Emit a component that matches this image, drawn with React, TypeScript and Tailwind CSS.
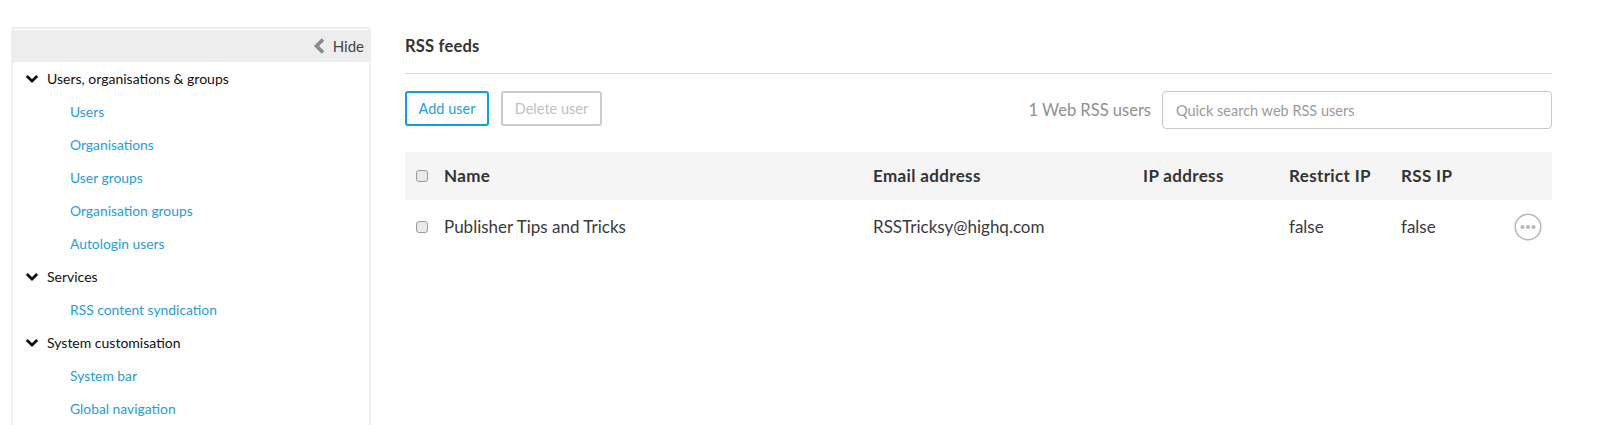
import React from "react";

function Chevron() {
  return (
    <svg width="14" height="10" viewBox="0 0 14 10" className="shrink-0">
      <path d="M1.8 2 L7 7 L12.2 2" fill="none" stroke="#111" strokeWidth="2.8" />
    </svg>
  );
}

function Group({ label }: { label: string }) {
  return (
    <div className="flex h-[33px] items-center pl-[12px] text-[14px] text-[#111]">
      <Chevron />
      <span className="ml-[8px]">{label}</span>
    </div>
  );
}

function Item({ label }: { label: string }) {
  return (
    <div className="flex h-[33px] items-center pl-[57px] pt-[2px] text-[13.85px] text-[#2a9bdc]">{label}</div>
  );
}

function Check() {
  return <span className="block h-[12px] w-[12px] rounded-[3px] border border-[#9a9a9a] bg-[#e9e9e9]" />;
}

const cols = "grid grid-cols-[39px_429px_270px_146px_112px_113px_1fr] items-center";

export default function App() {
  return (
    <div className="h-[425px] w-[1615px] overflow-hidden bg-white font-['Lato',sans-serif]">
      <div className="flex items-start pl-[11px] pt-[27px]">
        <aside className="h-[420px] w-[360px] shrink-0 rounded-t-[3px] border-2 border-[#eeeeee] border-b-0 bg-white">
          <div className="mt-[1px] flex h-[32px] items-center justify-end bg-[#ededed] pr-[5px] text-[15px] text-[#444]">
            <svg width="13" height="16" viewBox="0 0 13 16" className="mr-[7px]">
              <path d="M10 1.5 L3.5 8 L10 14.5" fill="none" stroke="#8a8a8a" strokeWidth="3.6" />
            </svg>
            Hide
          </div>
          <div>
            <Group label="Users, organisations & groups" />
            <Item label="Users" />
            <Item label="Organisations" />
            <Item label="User groups" />
            <Item label="Organisation groups" />
            <Item label="Autologin users" />
            <Group label="Services" />
            <Item label="RSS content syndication" />
            <Group label="System customisation" />
            <Item label="System bar" />
            <Item label="Global navigation" />
          </div>
        </aside>
        <main className="ml-[34px] w-[1147px] shrink-0">
          <h1 className="flex h-[47px] items-center border-b border-[#d9d9d9] pb-[7px] text-[16.5px] font-bold tracking-[0.2px] text-[#333]">RSS feeds</h1>
          <div className="mt-[17px] flex items-start">
            <button className="h-[35px] w-[84px] rounded-[3px] border-2 border-[#0f9fe0] text-[14.5px] text-[#2a9bdc]">Add user</button>
            <button className="ml-[12px] h-[35px] w-[101px] rounded-[3px] border-2 border-[#cccccc] text-[14.5px] text-[#c0c0c0]">Delete user</button>
            <span className="ml-auto flex h-[38px] items-center text-[16.5px] text-[#8f8f8f]">1 Web RSS users</span>
            <div className="ml-[11px] flex h-[38px] w-[390px] items-center rounded-[4px] border border-[#c8c8c8] pl-[13px] pt-[2px] text-[14.5px] text-[#9a9a9a]">Quick search web RSS users</div>
          </div>
          <div className={`${cols} mt-[23px] h-[48px] bg-[#f5f5f5] text-[17px] font-bold tracking-[0.35px] text-[#333]`}>
            <span className="pl-[11px]"><Check /></span>
            <span>Name</span>
            <span>Email address</span>
            <span>IP address</span>
            <span>Restrict IP</span>
            <span>RSS IP</span>
            <span />
          </div>
          <div className={`${cols} h-[54px] text-[17px] text-[#3a3a3a]`}>
            <span className="pl-[11px]"><Check /></span>
            <span>Publisher Tips and Tricks</span>
            <span>RSSTricksy@highq.com</span>
            <span />
            <span>false</span>
            <span>false</span>
            <span className="flex justify-end pr-[12px]">
              <svg width="28" height="28" viewBox="0 0 28 28">
                <circle cx="14" cy="14" r="12.8" fill="white" stroke="#b9b9b9" strokeWidth="1.6" />
                <circle cx="8.5" cy="14" r="2.1" fill="#b9b9b9" />
                <circle cx="14" cy="14" r="2.1" fill="#b9b9b9" />
                <circle cx="19.5" cy="14" r="2.1" fill="#b9b9b9" />
              </svg>
            </span>
          </div>
        </main>
      </div>
    </div>
  );
}
